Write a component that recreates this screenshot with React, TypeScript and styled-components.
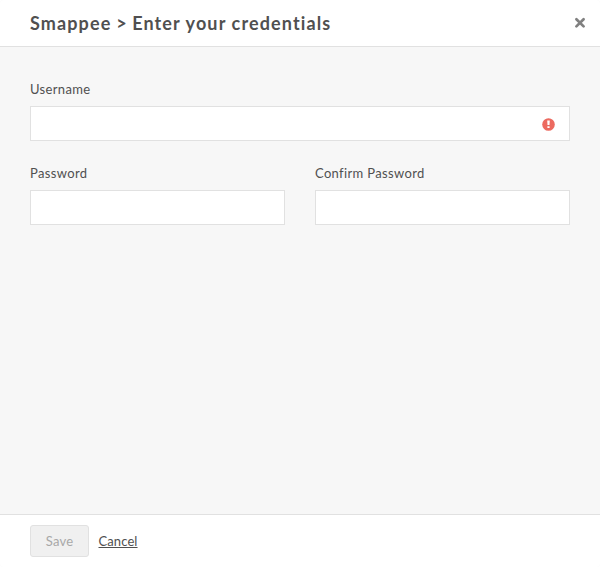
import React from "react";
import styled, { createGlobalStyle } from "styled-components";

const GlobalStyle = createGlobalStyle`
  * { box-sizing: border-box; }
  body { margin: 0; background: #fff; font-family: Lato, sans-serif; color: #505050; }
`;
const Dialog = styled.div`
  width: 600px;
  height: 567px;
  display: flex;
  flex-direction: column;
  background: #f7f7f7;
  border-radius: 4px;
  overflow: hidden;
`;
const Header = styled.header`
  height: 47px;
  padding: 0 14px 0 30px;
  display: flex;
  align-items: center;
  justify-content: space-between;
  background: #fff;
  border-bottom: 1px solid #e1e1e1;
`;
const Title = styled.h1`
  margin: 0;
  font-size: 18px;
  line-height: 24px;
  font-weight: 700;
  letter-spacing: 1.12px;
`;
const Separator = styled.span`
  margin: 0 -1px 0 -0.8px;
`;
const CloseButton = styled.button`
  display: flex;
  padding: 0;
  border: 0;
  background: none;
`;
const Body = styled.main`
  flex: 1;
  padding: 33px 30px 0;
  display: grid;
  grid-template-columns: 1fr 1fr;
  gap: 23px 30px;
  align-content: start;
`;
const Field = styled.label<{ $wide?: boolean }>`
  display: flex;
  flex-direction: column;
  gap: 7px;
  grid-column: ${(p) => (p.$wide ? "1 / -1" : "auto")};
`;
const Label = styled.span`
  font-size: 13px;
  line-height: 19px;
  letter-spacing: 0.35px;
`;
const InputBox = styled.span`
  height: 35px;
  padding-right: 14px;
  display: flex;
  align-items: center;
  background: #fff;
  border: 1px solid #e1e1e1;
`;
const Input = styled.input`
  flex: 1;
  min-width: 0;
  height: 100%;
  border: 0;
  outline: 0;
  background: transparent;
`;
const ErrorIcon = styled.svg`
  margin-top: 2px;
`;
const Footer = styled.footer`
  height: 53px;
  padding: 10px 30px 0;
  display: flex;
  gap: 9.5px;
  background: #fff;
  border-top: 1px solid #e1e1e1;
`;
const SaveButton = styled.button`
  width: 59px;
  height: 32px;
  padding: 0;
  border: 1px solid #e1e1e1;
  border-radius: 3px;
  background: #f0f0f0;
  color: #a8a8a8;
  font: 13px Lato, sans-serif;
  letter-spacing: 0.2px;
`;
const CancelLink = styled.a`
  font-size: 13px;
  line-height: 32px;
  letter-spacing: 0.1px;
  text-decoration: underline;
`;

export default function App() {
  return (
    <>
      <GlobalStyle />
      <Dialog>
        <Header>
          <Title>Smappee <Separator>&gt;</Separator> Enter your credentials</Title>
          <CloseButton aria-label="Close">
            <svg width="12" height="12" viewBox="0 0 12 12">
              <path d="M2.4 2.2L9.6 9.4M9.6 2.2L2.4 9.4" stroke="#808080" strokeWidth="2.7" strokeLinecap="round" />
            </svg>
          </CloseButton>
        </Header>
        <Body>
          <Field $wide>
            <Label>Username</Label>
            <InputBox>
              <Input />
              <ErrorIcon width="13" height="13" viewBox="0 0 13 13">
                <circle cx="6.5" cy="6.5" r="6.3" fill="#ec6a60" />
                <path d="M5.2 2.6h2.6l-.3 4.5h-2zM5.4 8.2h2.2v1.9H5.4z" fill="#fff" />
              </ErrorIcon>
            </InputBox>
          </Field>
          <Field>
            <Label>Password</Label>
            <InputBox><Input type="password" /></InputBox>
          </Field>
          <Field>
            <Label>Confirm Password</Label>
            <InputBox><Input type="password" /></InputBox>
          </Field>
        </Body>
        <Footer>
          <SaveButton disabled>Save</SaveButton>
          <CancelLink>Cancel</CancelLink>
        </Footer>
      </Dialog>
    </>
  );
}
